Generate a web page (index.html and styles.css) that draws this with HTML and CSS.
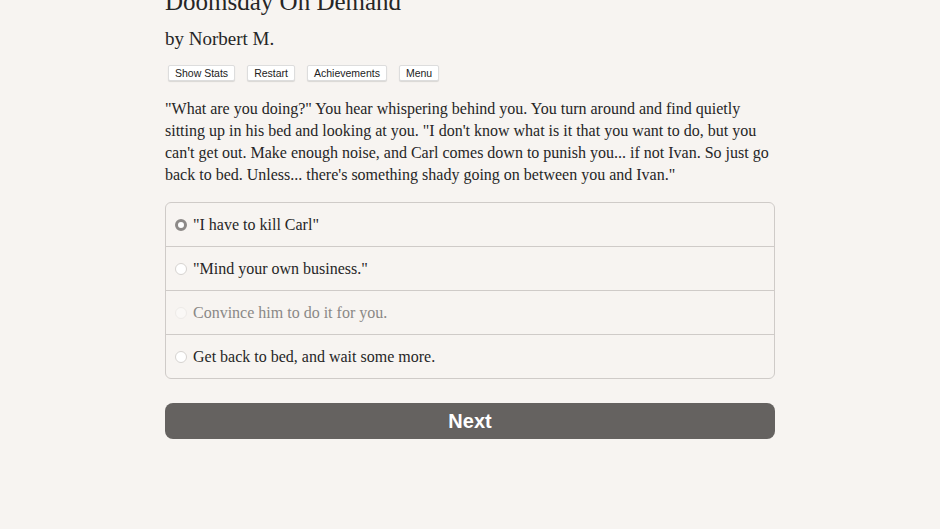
FILE: index.html
```html
<!DOCTYPE html>
<html>
<head>
<meta charset="utf-8">
<link rel="stylesheet" href="styles.css">
</head>
<body>
<div class="page">
  <h1 class="title">Doomsday On Demand</h1>
  <h2 class="author">by Norbert M.</h2>
  <div class="toolbar">
    <button class="tbtn">Show Stats</button>
    <button class="tbtn">Restart</button>
    <button class="tbtn">Achievements</button>
    <button class="tbtn">Menu</button>
  </div>
  <p class="story">"What are you doing?" You hear whispering behind you. You turn around and find quietly sitting up in his bed and looking at you. "I don't know what is it that you want to do, but you can't get out. Make enough noise, and Carl comes down to punish you... if not Ivan. So just go back to bed. Unless... there's something shady going on between you and Ivan."</p>
  <div class="choices">
    <div class="choice"><span class="radio checked"></span><span>"I have to kill Carl"</span></div>
    <div class="choice"><span class="radio"></span><span>"Mind your own business."</span></div>
    <div class="choice disabled"><span class="radio"></span><span>Convince him to do it for you.</span></div>
    <div class="choice"><span class="radio"></span><span>Get back to bed, and wait some more.</span></div>
  </div>
  <button class="next">Next</button>
</div>
</body>
</html>
```
FILE: styles.css
```css
html, body {
  margin: 0;
  padding: 0;
  background: #f7f4f1;
}
body {
  font-family: "Liberation Serif", "Times New Roman", serif;
  color: #262626;
}
.page {
  width: 610px;
  margin: 0 auto 0 165px;
  display: flex;
  flex-direction: column;
  align-items: stretch;
}
.title {
  margin: -13px 0 0 0;
  font-weight: normal;
  font-size: 25px;
  line-height: 30px;
  height: 30px;
}
.author {
  margin: 10px 0 0 0;
  font-weight: normal;
  font-size: 19px;
  line-height: 24px;
}
.toolbar {
  display: flex;
  gap: 12px;
  margin: 14px 0 0 3px;
}
.tbtn {
  font-family: "Liberation Sans", Arial, sans-serif;
  font-size: 10.5px;
  color: #222;
  background: #fff;
  border: 1px solid #ddd;
  border-radius: 2px;
  box-shadow: 0 1px 1px rgba(0,0,0,0.12);
  padding: 0 6px;
  height: 16px;
  line-height: 14px;
}
.story {
  margin: 17px 0 0 0;
  font-size: 16px;
  line-height: 22px;
}
.choices {
  margin-top: 16px;
  border: 1px solid #cfcbc8;
  border-radius: 6px;
  display: flex;
  flex-direction: column;
}
.choice {
  height: 43px;
  display: flex;
  align-items: center;
  gap: 6px;
  padding-left: 9px;
  font-size: 16px;
  border-top: 1px solid #cfcbc8;
}
.choice:first-child {
  border-top: none;
}
.choice.disabled {
  color: #8a8886;
}
.radio {
  width: 12px;
  height: 12px;
  border-radius: 50%;
  background: #fff;
  border: 1px solid #d6d3d0;
  box-sizing: border-box;
  flex: none;
}
.choice.disabled .radio {
  border-color: #eeebe8;
  background: #faf8f6;
}
.radio.checked {
  background: #fff;
  border: 3px solid #8d8a88;
}
.next {
  margin-top: 24px;
  height: 36px;
  border: none;
  border-radius: 8px;
  background: #656260;
  color: #fff;
  font-family: "Liberation Sans", Arial, sans-serif;
  font-weight: bold;
  font-size: 20px;
}
```
